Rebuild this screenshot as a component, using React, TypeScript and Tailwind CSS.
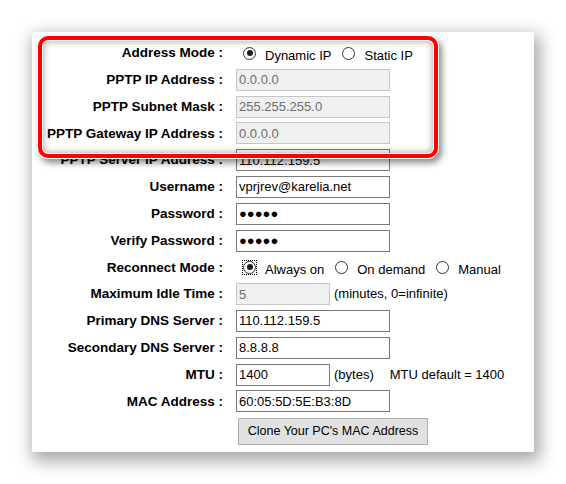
import clsx from 'clsx';
import type { ReactNode } from 'react';

const Row = ({ label, children }: { label: string; children: ReactNode }) => (
    <div className="grid grid-cols-[191px_1fr] gap-x-[13px] items-center h-[22px]">
        <div className="text-right font-bold text-[13.5px] leading-none whitespace-nowrap text-black">{label}</div>
        <div className="flex items-center h-[22px]">{children}</div>
    </div>
);

const Field = ({ value, disabled, small }: { value: string; disabled?: boolean; small?: boolean }) => (
    <input
        readOnly
        value={value}
        className={clsx(
            'h-[22px] border px-[2px] text-[13px] outline-none',
            small ? 'w-[94px]' : 'w-[154px]',
            disabled ? 'bg-[#f0f0f0] border-[#c6c6c6] text-[#6d6d6d]' : 'bg-white border-[#7a7a7a] text-black'
        )}
    />
);

const Radio = ({ checked, focus }: { checked?: boolean; focus?: boolean }) => (
    <span
        className={clsx(
            'flex items-center justify-center w-[15px] h-[15px] shrink-0',
            focus && 'border border-dotted border-black'
        )}
    >
        <span className="flex items-center justify-center w-[13px] h-[13px] rounded-full border border-[#333333] bg-white">
            {checked && <span className="w-[6px] h-[6px] rounded-full bg-[#1a1a1a]" />}
        </span>
    </span>
);

const Choice = ({ text, checked, focus }: { text: string; checked?: boolean; focus?: boolean }) => (
    <span className="flex items-center">
        <Radio checked={checked} focus={focus} />
        <span className="ml-[8px] pt-[5px] text-[13px]">{text}</span>
    </span>
);

export default function App() {
    return (
        <div className="relative min-h-[484px] bg-white pt-[32px] pl-[32px] font-['Liberation_Sans',Arial,sans-serif] text-black">
            <div className="w-[502px] h-[420px] bg-white shadow-[3px_6px_16px_3px_rgba(0,0,0,0.35)] pt-[10px] flex flex-col gap-[4.8px]">
                <Row label="Address Mode :">
                    <span className="flex items-center gap-[10px] pl-[6px]">
                        <Choice text="Dynamic IP" checked />
                        <Choice text="Static IP" />
                    </span>
                </Row>
                <Row label="PPTP IP Address :">
                    <Field value="0.0.0.0" disabled />
                </Row>
                <Row label="PPTP Subnet Mask :">
                    <Field value="255.255.255.0" disabled />
                </Row>
                <Row label="PPTP Gateway IP Address :">
                    <Field value="0.0.0.0" disabled />
                </Row>
                <Row label="PPTP Server IP Address :">
                    <Field value="110.112.159.5" />
                </Row>
                <Row label="Username :">
                    <Field value="vprjrev@karelia.net" />
                </Row>
                <Row label="Password :">
                    <Field value="●●●●●" />
                </Row>
                <Row label="Verify Password :">
                    <Field value="●●●●●" />
                </Row>
                <Row label="Reconnect Mode :">
                    <span className="flex items-center gap-[10px] pl-[6px]">
                        <Choice text="Always on" checked focus />
                        <Choice text="On demand" />
                        <Choice text="Manual" />
                    </span>
                </Row>
                <Row label="Maximum Idle Time :">
                    <Field value="5" disabled small />
                    <span className="ml-[4px] text-[13px]">(minutes, 0=infinite)</span>
                </Row>
                <Row label="Primary DNS Server :">
                    <Field value="110.112.159.5" />
                </Row>
                <Row label="Secondary DNS Server :">
                    <Field value="8.8.8.8" />
                </Row>
                <Row label="MTU :">
                    <Field value="1400" small />
                    <span className="ml-[4px] text-[13px]">(bytes)</span>
                    <span className="ml-[16px] text-[13px]">MTU default = 1400</span>
                </Row>
                <Row label="MAC Address :">
                    <Field value="60:05:5D:5E:B3:8D" />
                </Row>
                <div className="grid grid-cols-[191px_1fr] gap-x-[13px] mt-[1px]">
                    <div />
                    <button
                        type="button"
                        className="ml-[2px] w-[190px] h-[27px] bg-[#e1e1e1] border border-[#adadad] text-[12.5px] text-black"
                    >
                        Clone Your PC's MAC Address
                    </button>
                </div>
            </div>

            {/* red highlight frame laid over the top rows */}
            <div className="pointer-events-none absolute left-[38px] top-[36px] w-[400px] h-[122px] rounded-[10px] border-4 border-[#ff0000] shadow-[0_0_0_1px_#ffffff,3px_4px_6px_1px_rgba(0,0,0,0.45),inset_0_0_0_1px_#ffffff,inset_0_0_6px_2px_rgba(0,0,0,0.3)]" />
        </div>
    );
}
